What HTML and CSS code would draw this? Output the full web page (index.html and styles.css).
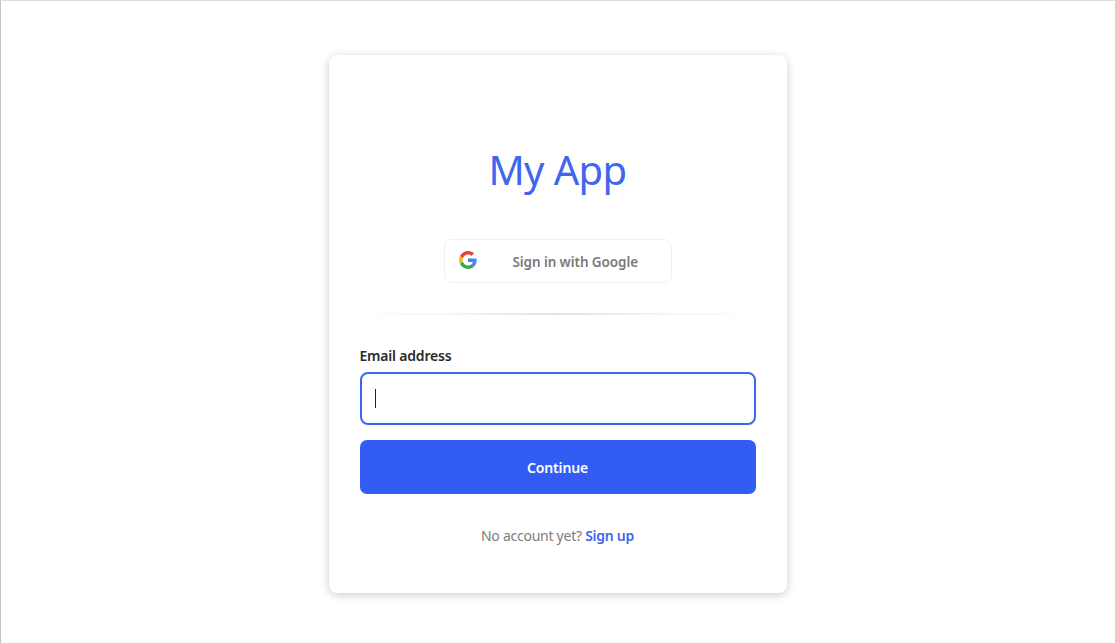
FILE: index.html
```html
<!DOCTYPE html>
<html lang="en">
<head>
<meta charset="UTF-8">
<title>My App</title>
<link rel="stylesheet" href="styles.css">
</head>
<body>

<div class="card">
    <h1 class="title">My App</h1>

    <button class="google-btn" type="button">
        <svg class="google-icon" viewBox="0 0 48 48" width="18" height="18">
            <path fill="#EA4335" d="M24 9.5c3.54 0 6.71 1.22 9.21 3.6l6.85-6.85C35.9 2.38 30.47 0 24 0 14.62 0 6.51 5.38 2.56 13.22l7.98 6.19C12.43 13.72 17.74 9.5 24 9.5z"/>
            <path fill="#4285F4" d="M46.98 24.55c0-1.57-.15-3.09-.38-4.55H24v9.02h12.94c-.58 2.96-2.26 5.48-4.78 7.18l7.73 6c4.51-4.18 7.09-10.36 7.09-17.65z"/>
            <path fill="#FBBC05" d="M10.53 28.59c-.48-1.45-.76-2.99-.76-4.59s.27-3.14.76-4.59l-7.98-6.19C.92 16.46 0 20.12 0 24c0 3.88.92 7.54 2.56 10.78l7.97-6.19z"/>
            <path fill="#34A853" d="M24 48c6.48 0 11.93-2.13 15.89-5.81l-7.73-6c-2.15 1.45-4.92 2.3-8.16 2.3-6.26 0-11.57-4.22-13.47-9.91l-7.98 6.19C6.51 42.62 14.62 48 24 48z"/>
        </svg>
        <span class="google-text">Sign in with Google</span>
    </button>

    <div class="divider"></div>

    <form class="login-form">
        <label class="field-label" for="email">Email address</label>
        <div class="email-input" id="email"><span class="caret"></span></div>
        <button class="continue-btn" type="button">Continue</button>
    </form>

    <p class="signup">No account yet? <a href="#">Sign up</a></p>
</div>

</body>
</html>
```

FILE: styles.css
```css
html, body {
    height: 100%;
}
body {
    margin: 0;
    box-sizing: border-box;
    height: 643px;
    overflow: hidden;
    background-color: #fff;
    border-top: 1px solid #dedede;
    border-left: 1px solid #c4c4c4;
    font-family: "Noto Sans", "Open Sans", sans-serif;
    display: flex;
    justify-content: center;
    align-items: flex-start;
}
.card {
    box-sizing: border-box;
    width: 458px;
    height: 538px;
    margin-top: 54px;
    margin-right: 1px;
    padding: 0 31px;
    background-color: #fff;
    border-radius: 8px;
    box-shadow: 0 2px 10px rgba(0, 0, 0, 0.2);
}
.title {
    margin: 90px 0 0;
    height: 50px;
    line-height: 50px;
    font-size: 40px;
    font-weight: 400;
    letter-spacing: -0.6px;
    text-align: center;
    color: #3e66ee;
}
.google-btn {
    display: flex;
    align-items: center;
    box-sizing: border-box;
    width: 228px;
    height: 44px;
    margin: 44px 0 0 84px;
    padding: 0 14px;
    background-color: #fff;
    border: 1px solid #f0f0f0;
    border-radius: 8px;
    font-family: inherit;
}
.google-icon {
    flex-shrink: 0;
    margin-top: -2px;
}
.google-text {
    margin-top: 2px;
    margin-left: 36px;
    font-size: 13.5px;
    font-weight: 600;
    letter-spacing: -0.08px;
    color: #7a7a7a;
}
.divider {
    width: 366px;
    height: 2px;
    margin: 30px auto 0;
    background: linear-gradient(to right, #fdfdfd, #f3f3f3 25%, #e2e2e2 50%, #f3f3f3 75%, #fdfdfd);
}
.login-form {
    margin-top: 31px;
}
.field-label {
    display: block;
    height: 20px;
    line-height: 20px;
    font-size: 14px;
    font-weight: 600;
    letter-spacing: -0.2px;
    color: #2b2b2b;
}
.email-input {
    display: flex;
    align-items: center;
    box-sizing: border-box;
    height: 53px;
    margin-top: 6px;
    padding-left: 13px;
    border: 2px solid #3f66ee;
    border-radius: 8px;
}
.caret {
    width: 1px;
    height: 19px;
    background-color: #222;
}
.continue-btn {
    display: block;
    width: 100%;
    height: 54px;
    margin-top: 15px;
    background-color: #335cf5;
    border: none;
    border-radius: 7px;
    font-family: inherit;
    font-size: 14px;
    font-weight: 600;
    letter-spacing: -0.17px;
    color: #fff;
}
.signup {
    margin: 32px 0 0;
    line-height: 20px;
    font-size: 14px;
    letter-spacing: -0.26px;
    text-align: center;
    color: #7d7d7d;
}
.signup a {
    font-weight: 600;
    color: #3e66ee;
    text-decoration: none;
}
```
